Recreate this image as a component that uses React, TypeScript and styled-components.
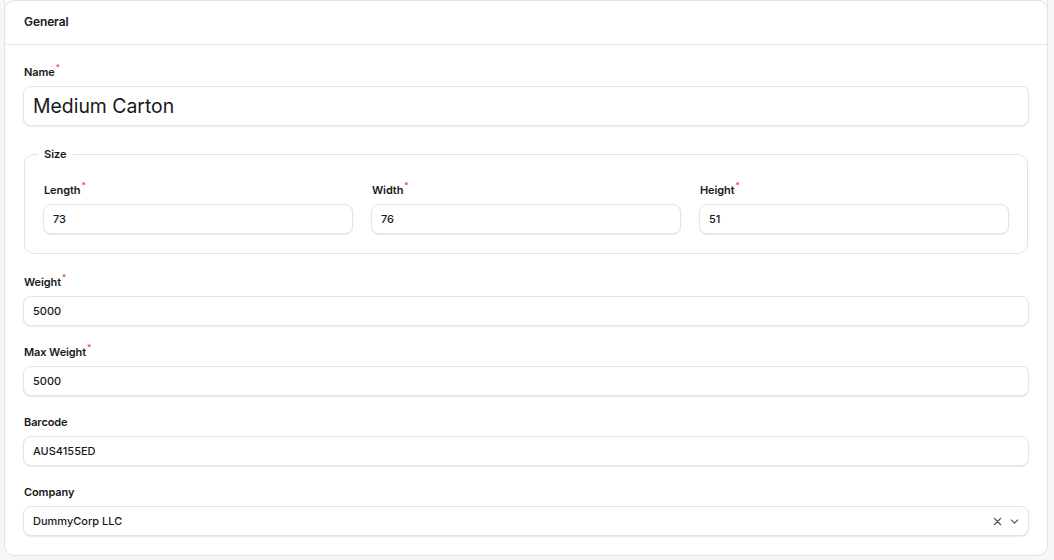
import React from "react";
import styled, { createGlobalStyle } from "styled-components";

const GlobalStyle = createGlobalStyle`
  * { box-sizing: border-box; }
  html, body {
    margin: 0;
    padding: 0;
    background: #f7f7f8;
    font-family: Inter, "Noto Sans", Arial, sans-serif;
    color: #18181b;
  }
`;

const Page = styled.div`
  padding: 0 6px 0 4px;
  height: 560px;
`;

const Card = styled.section`
  background: #ffffff;
  border: 1px solid #e4e4e7;
  border-top: none;
  border-radius: 0 0 10px 10px;
  position: relative;
  &::before {
    content: "";
    position: absolute;
    inset: 0 -1px auto -1px;
    height: 12px;
    border: 1px solid #e4e4e7;
    border-bottom: none;
    border-radius: 10px 10px 0 0;
    pointer-events: none;
  }
`;

const Header = styled.header`
  height: 45px;
  display: flex;
  align-items: center;
  padding: 0 19px 2px;
  border-bottom: 1px solid #e4e4e7;
  font-size: 12px;
  font-weight: 600;
  letter-spacing: -0.1px;
`;

const Body = styled.div`
  display: flex;
  flex-direction: column;
  gap: 18px;
  padding: 19px 18px 19px 18px;
`;

const Field = styled.div`
  display: flex;
  flex-direction: column;
`;

const Label = styled.label`
  display: block;
  font-size: 11px;
  font-weight: 600;
  line-height: 16px;
  margin: 0 0 6px 1px;
  color: #18181b;
  letter-spacing: -0.1px;
`;

const Required = styled.sup`
  color: #ef4444;
  font-size: 8px;
  line-height: 0;
  margin-left: 1px;
  position: relative;
  top: -1px;
`;

const InputBox = styled.div<{ $large?: boolean }>`
  display: flex;
  align-items: center;
  height: ${(p) => (p.$large ? "40px" : "30px")};
  padding: 0 9px;
  border: 1px solid #e4e4e7;
  border-radius: 8px;
  background: #ffffff;
  box-shadow: 0 1px 1.5px rgba(0, 0, 0, 0.09);
  font-size: ${(p) => (p.$large ? "19.4px" : "11px")};
  font-weight: ${(p) => (p.$large ? 400 : 500)};
  color: #18181b;
`;

const Value = styled.span`
  flex: 1;
`;

const Fieldset = styled.fieldset`
  margin: 2px 1px 2px 1px;
  padding: 20px 18px 19px;
  border: 1px solid #e4e4e7;
  border-radius: 10px;
`;

const Legend = styled.legend`
  margin-left: -5px;
  padding: 0 6px;
  font-size: 11px;
  font-weight: 600;
  line-height: 16px;
`;

const Row = styled.div`
  display: grid;
  grid-template-columns: repeat(3, 1fr);
  gap: 18px;
`;

const Controls = styled.div`
  display: flex;
  align-items: center;
  gap: 4px;
  color: #52525b;
  margin-right: -2px;
`;

const XIcon = () => (
  <svg width="13" height="13" viewBox="0 0 24 24" fill="none" stroke="currentColor" strokeWidth="2" strokeLinecap="round">
    <path d="M18 6 6 18M6 6l12 12" />
  </svg>
);

const ChevronIcon = () => (
  <svg width="13" height="13" viewBox="0 0 24 24" fill="none" stroke="currentColor" strokeWidth="2" strokeLinecap="round" strokeLinejoin="round">
    <path d="m6 9 6 6 6-6" />
  </svg>
);

const TextField = ({ label, value, required }: { label: string; value: string; required?: boolean }) => (
  <Field>
    <Label>
      {label}
      {required && <Required>*</Required>}
    </Label>
    <InputBox>
      <Value>{value}</Value>
    </InputBox>
  </Field>
);

export default function App() {
  return (
    <>
      <GlobalStyle />
      <Page>
        <Card>
          <Header>General</Header>
          <Body>
            <Field>
              <Label>
                Name<Required>*</Required>
              </Label>
              <InputBox $large>
                <Value>Medium Carton</Value>
              </InputBox>
            </Field>
            <Fieldset>
              <Legend>Size</Legend>
              <Row>
                <TextField label="Length" value="73" required />
                <TextField label="Width" value="76" required />
                <TextField label="Height" value="51" required />
              </Row>
            </Fieldset>
            <TextField label="Weight" value="5000" required />
            <TextField label="Max Weight" value="5000" required />
            <TextField label="Barcode" value="AUS4155ED" />
            <Field>
              <Label>Company</Label>
              <InputBox>
                <Value>DummyCorp LLC</Value>
                <Controls>
                  <XIcon />
                  <ChevronIcon />
                </Controls>
              </InputBox>
            </Field>
          </Body>
        </Card>
      </Page>
    </>
  );
}
